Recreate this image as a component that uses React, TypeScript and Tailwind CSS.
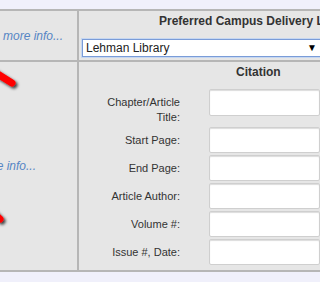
const fields: { label: string; tall?: boolean }[] = [
  { label: "Chapter/Article Title:", tall: true },
  { label: "Start Page:" },
  { label: "End Page:" },
  { label: "Article Author:" },
  { label: "Volume #:" },
  { label: "Issue #, Date:" },
];

const Arrows = () => (
  <svg className="absolute left-0 top-0 pointer-events-none" width="40" height="282" viewBox="0 0 40 282">
    <defs>
      <filter id="sh" x="-50%" y="-50%" width="200%" height="200%">
        <feDropShadow dx="2" dy="2" stdDeviation="1.5" floodColor="#000" floodOpacity="0.75" />
      </filter>
    </defs>
    <g filter="url(#sh)" stroke="#ff0000" strokeWidth="7" strokeLinecap="round">
      <line x1="-12" y1="68" x2="12" y2="83" />
      <line x1="-14" y1="206" x2="0" y2="219" />
    </g>
  </svg>
);

export default function App() {
  return (
    <div
      className="relative w-[320px] h-[282px] overflow-hidden bg-[#f0f0fb] text-[#333]"
      style={{ fontFamily: '"Liberation Sans", Arial, sans-serif' }}
    >
      <div className="h-[9px]" />
      <div className="border-y-2 border-[#b6b6b6] bg-[#e6e6e6]">
        {/* delivery row */}
        <div className="flex h-[51px] border-b-2 border-[#b6b6b6]">
          <div className="w-[79px] shrink-0 border-r-2 border-[#b6b6b6] flex items-center pl-[3px] overflow-hidden">
            <span className="italic text-[12px] text-[#5585c4] whitespace-nowrap">more info...</span>
          </div>
          <div className="flex-1 min-w-0 pl-[3px]">
            <div className="h-[20px] leading-[20px] pl-[77px] text-[12px] font-bold whitespace-nowrap">
              Preferred Campus Delivery L
            </div>
            <div className="mt-[8px] h-[18px] w-[242px] flex items-center justify-between bg-white border border-[#7a9cd8] shadow-[0_0_0_1px_#c6d7f1] pl-[3px] pr-[6px] text-[12px] text-[#222]">
              <span>Lehman Library</span>
              <span className="text-[10px] leading-none text-black">▼</span>
            </div>
          </div>
        </div>

        {/* citation row */}
        <div className="flex h-[208px]">
          <div className="w-[79px] shrink-0 border-r-2 border-[#b6b6b6] flex items-center overflow-hidden">
            <span className="-ml-[24px] italic text-[12px] text-[#5585c4] whitespace-nowrap">more info...</span>
          </div>
          <div className="flex-1 min-w-0">
            <div className="h-[20px] leading-[20px] pl-[157px] text-[12px] font-bold">Citation</div>
            <div className="mt-[7px] flex flex-col">
              {fields.map((f) => (
                <div key={f.label} className={`flex ${f.tall ? "h-[38px]" : "h-[28px]"}`}>
                  <div
                    className={`w-[104px] shrink-0 pr-[3px] text-right text-[11px] leading-[15px] text-[#333] ${
                      f.tall ? "pt-[6px] pl-[24px]" : "h-[26px] flex items-center justify-end"
                    }`}
                  >
                    {f.label}
                  </div>
                  <div
                    className={`ml-[26px] w-[140px] bg-white border border-[#cfcfcf] rounded-[2px] shadow-[inset_0_1px_1px_#dcdcdc] ${
                      f.tall ? "h-[27px]" : "h-[26px]"
                    }`}
                  />
                </div>
              ))}
            </div>
          </div>
        </div>
      </div>
      <Arrows />
    </div>
  );
}
